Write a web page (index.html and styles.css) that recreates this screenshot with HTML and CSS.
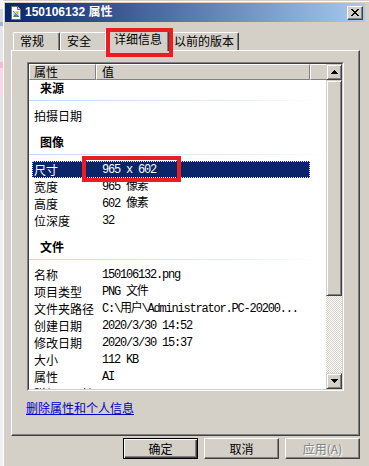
FILE: index.html
```html
<!DOCTYPE html>
<html lang="zh-CN">
<head>
    <meta charset="UTF-8">
    <meta name="viewport" content="width=device-width, initial-scale=1.0">
    <title>150106132 属性</title>
    <link rel="stylesheet" href="styles.css">
</head>
<body>
    <div class="screen">
        <div class="desk"></div>
        <div class="window">
            <div class="titlebar">
                <svg class="title-icon" width="14" height="14" viewBox="0 0 14 14">
                    <path d="M2.5 0.5h6l3 3v10h-9z" fill="#fff" stroke="#707070"/>
                    <path d="M8.5 0.5v3h3" fill="#e4e4e4" stroke="#707070"/>
                    <rect x="4" y="5" width="6" height="6" fill="#cfe6ff"/>
                    <path d="M4 11l2.2-3.4 1.4 2 1-1.2 1.4 2.6z" fill="#3a9e44"/>
                    <circle cx="8.3" cy="6.6" r="1.1" fill="#f0a010"/>
                    <path d="M4 5l6 6" stroke="#2f6fd0" stroke-width="0.8"/>
                </svg>
                <span class="title-text">150106132 属性</span>
                <button class="close-btn">
                    <svg width="8" height="7" viewBox="0 0 8 7" shape-rendering="crispEdges">
                        <path d="M0 0h2v1H0zM6 0h2v1H6zM1 1h2v1H1zM5 1h2v1H5zM2 2h4v1H2zM3 3h2v1H3zM2 4h4v1H2zM1 5h2v1H1zM5 5h2v1H5zM0 6h2v1H0zM6 6h2v1H6z"/>
                    </svg>
                </button>
            </div>

            <div class="tabs">
                <div class="tab short">常规</div>
                <div class="tab short">安全</div>
                <div class="tab active">详细信息</div>
                <div class="tab">以前的版本</div>
            </div>

            <div class="panel">
                <div class="listbox">
                    <div class="list-inner">
                        <div class="list-main">
                            <div class="list-header">
                                <div class="hcell name">属性</div>
                                <div class="hcell value">值</div>
                                <div class="hcell rest"></div>
                            </div>
                            <div class="rows">
                                <div class="group first">
                                    <div class="group-title">来源</div>
                                    <div class="group-line"></div>
                                </div>
                                <div class="row"><span class="k">拍摄日期</span><span class="v"></span></div>

                                <div class="group">
                                    <div class="group-title">图像</div>
                                    <div class="group-line"></div>
                                </div>
                                <div class="row selected">
                                    <span class="k">尺寸</span><span class="v">965 x 602</span>
                                    <span class="mark"></span>
                                </div>
                                <div class="row"><span class="k">宽度</span><span class="v">965 像素</span></div>
                                <div class="row"><span class="k">高度</span><span class="v">602 像素</span></div>
                                <div class="row"><span class="k">位深度</span><span class="v">32</span></div>

                                <div class="group">
                                    <div class="group-title">文件</div>
                                    <div class="group-line"></div>
                                </div>
                                <div class="row"><span class="k">名称</span><span class="v">150106132.png</span></div>
                                <div class="row"><span class="k">项目类型</span><span class="v">PNG 文件</span></div>
                                <div class="row"><span class="k">文件夹路径</span><span class="v">C:\用户\Administrator.PC-20200...</span></div>
                                <div class="row"><span class="k">创建日期</span><span class="v">2020/3/30 14:52</span></div>
                                <div class="row"><span class="k">修改日期</span><span class="v">2020/3/30 15:37</span></div>
                                <div class="row"><span class="k">大小</span><span class="v">112 KB</span></div>
                                <div class="row"><span class="k">属性</span><span class="v">AI</span></div>
                                <div class="row cut"><span class="k">脱机可用性</span><span class="v"></span></div>
                            </div>
                        </div>
                        <div class="scrollbar">
                            <div class="sb-btn">
                                <svg width="7" height="4" viewBox="0 0 7 4" shape-rendering="crispEdges">
                                    <path d="M3 0h1v1h1v1h1v1h1v1H0V3h1V2h1V1h1z"/>
                                </svg>
                            </div>
                            <div class="sb-thumb"></div>
                            <div class="sb-track"></div>
                            <div class="sb-btn">
                                <svg width="7" height="4" viewBox="0 0 7 4" shape-rendering="crispEdges">
                                    <path d="M0 0h7v1H6v1H5v1H4v1H3V3H2V2H1V1H0z"/>
                                </svg>
                            </div>
                        </div>
                    </div>
                </div>
                <a class="remove-link" href="#">删除属性和个人信息</a>
            </div>

            <div class="buttons">
                <button class="btn default">确定</button>
                <button class="btn">取消</button>
                <button class="btn" disabled>应用(A)</button>
            </div>
        </div>
    </div>
</body>
</html>
```

FILE: styles.css
```css
*,
*::before,
*::after {
    box-sizing: border-box;
}
body {
    margin: 0;
    width: 369px;
    height: 466px;
    overflow: hidden;
    background: #d4d0c8;
    font-family: "Noto Sans CJK SC", "Liberation Sans", sans-serif;
    font-size: 12px;
    color: #000;
}
.screen {
    display: flex;
    height: 466px;
}
/* 窗口后面露出的一点桌面 */
.desk {
    width: 3px;
    flex: none;
    background: linear-gradient(to bottom,
        #f4f4f4 0 9px, #d8d8d8 9px 22px, #9fb4dc 22px 26px,
        #e6e6e6 26px 62px, #f6b9d0 62px 68px, #fbd6e4 68px 96px,
        #e4e4e4 96px 200px, #f0f0f0 200px);
}
.window {
    flex: 1;
    border-left: 1px solid #fff;
    border-top: 1px solid #fff;
    margin-top: 1px;
    padding: 1px 4px 0 1px;
}

/* 标题栏 */
.titlebar {
    height: 19px;
    display: flex;
    align-items: center;
    padding: 0 2px 0 4px;
    background: linear-gradient(to right, #0a246a, #a6caf0);
}
.title-icon {
    flex: none;
    margin-right: 2px;
}
.title-text {
    flex: 1;
    color: #fff;
    font-family: "Liberation Sans", "Noto Sans CJK SC", sans-serif;
    font-weight: bold;
    font-size: 12px;
    line-height: 19px;
    white-space: nowrap;
}
.close-btn {
    width: 16px;
    height: 14px;
    padding: 0;
    display: flex;
    align-items: center;
    justify-content: center;
    background: #d4d0c8;
    border: 1px solid;
    border-color: #fff #404040 #404040 #fff;
    box-shadow: inset -1px -1px #808080;
}

/* 选项卡 */
.tabs {
    height: 28px;
    display: flex;
    align-items: flex-end;
    padding-left: 8px;
}
.tab {
    height: 18px;
    padding: 0 4px 0 6px;
    line-height: 16px;
    white-space: nowrap;
    background: #d4d0c8;
    border-top: 1px solid #fff;
    border-left: 1px solid #fff;
    border-right: 1px solid #404040;
    box-shadow: inset -1px 0 #808080;
    border-radius: 2px 2px 0 0;
}
.tab.short {
    min-width: 47px;
}
.tab.active {
    height: 21px;
    margin: 0 -2px -1px;
    padding: 0 6px 0 8px;
    position: relative;
    z-index: 1;
}
/* 红色标注框 */
.tab.active::after {
    content: "";
    position: absolute;
    top: -3px;
    left: 0;
    width: 67px;
    height: 29px;
    border: 4px solid #ec1c24;
}

/* 选项卡面板 */
.panel {
    height: 386px;
    margin: 0 5px 0 6px;
    padding: 11px 15px 0 15px;
    border-top: 1px solid #fff;
    border-left: 1px solid #fff;
    border-right: 1px solid #404040;
    border-bottom: 1px solid #404040;
    box-shadow: inset -1px -1px #808080;
}
.listbox {
    height: 329px;
    border: 1px solid;
    border-color: #808080 #fff #fff #808080;
}
.list-inner {
    height: 100%;
    display: flex;
    border: 1px solid;
    border-color: #404040 #d4d0c8 #d4d0c8 #404040;
    background: #fff;
}
.list-main {
    flex: 1;
    display: flex;
    flex-direction: column;
    min-width: 0;
}
.list-header {
    height: 16px;
    display: flex;
    flex: none;
}
.hcell {
    height: 16px;
    line-height: 14px;
    background: #d4d0c8;
    border-top: 1px solid #fff;
    border-left: 1px solid #fff;
    border-right: 1px solid #808080;
    border-bottom: 1px solid #808080;
}
.hcell.name {
    width: 67px;
    padding-left: 4px;
}
.hcell.value {
    width: 214px;
    padding-left: 5px;
}
.hcell.rest {
    flex: 1;
    border-right: none;
}
.rows {
    flex: 1;
    overflow: hidden;
}

/* 分组标题 */
.group {
    padding: 10px 0 6px;
}
.group.first {
    padding-top: 0;
}
.group-title {
    padding-left: 11px;
    line-height: 16px;
    font-weight: bold;
}
.group-line {
    height: 1px;
    margin-top: 4px;
    background: linear-gradient(to right, #c4daf2, #e4eefa 70%, #fff);
}

.row {
    height: 17px;
    width: 278px;
    margin-left: 3px;
    display: flex;
    line-height: 17px;
    white-space: nowrap;
}
.row.cut {
    height: 4px;
    overflow: hidden;
}
.row .k {
    width: 63px;
    flex: none;
    padding-left: 2px;
    overflow: hidden;
}
.row .v {
    padding: 1px 0 0 7px;
    line-height: 16px;
    font-family: "Liberation Mono", "Noto Sans CJK SC", monospace;
    font-size: 12px;
    letter-spacing: -1.2px;
}
.row.selected {
    background: #0a246a;
    color: #fff;
    outline: 1px dotted #f4ecb8;
    outline-offset: -1px;
    position: relative;
}
.row .mark {
    position: absolute;
    left: 50px;
    top: -5px;
    width: 99px;
    height: 26px;
    border: 4px solid #ec1c24;
}

/* 滚动条 */
.scrollbar {
    width: 16px;
    flex: none;
    display: flex;
    flex-direction: column;
}
.sb-btn,
.sb-thumb {
    background: #d4d0c8;
    border: 1px solid;
    border-color: #d4d0c8 #404040 #404040 #d4d0c8;
    box-shadow: inset 1px 1px #fff, inset -1px -1px #808080;
}
.sb-btn {
    height: 16px;
    display: flex;
    align-items: center;
    justify-content: center;
}
.sb-thumb {
    height: 216px;
}
.sb-track {
    flex: 1;
    background: repeating-conic-gradient(#fff 0 25%, #d4d0c8 0 50%) 0 0 / 2px 2px;
}

.remove-link {
    display: block;
    width: max-content;
    margin: 9px 0 0 -1px;
    line-height: 16px;
    color: #0000cc;
    text-decoration: underline;
}

/* 底部按钮 */
.buttons {
    display: flex;
    justify-content: flex-end;
    gap: 6px;
    margin-top: 2px;
    padding-right: 5px;
}
.btn {
    width: 75px;
    height: 21px;
    padding: 0;
    font-family: "Noto Sans CJK SC", "Liberation Sans", sans-serif;
    font-size: 12px;
    line-height: 17px;
    color: #000;
    background: #d4d0c8;
    border: 1px solid;
    border-color: #fff #404040 #404040 #fff;
    box-shadow: inset -1px -1px #808080;
}
.btn.default {
    border-color: #000;
    box-shadow: inset 1px 1px #fff, inset -1px -1px #404040, inset -2px -2px #808080;
}
.btn:disabled {
    color: #808080;
    text-shadow: 1px 1px #fff;
}
```
